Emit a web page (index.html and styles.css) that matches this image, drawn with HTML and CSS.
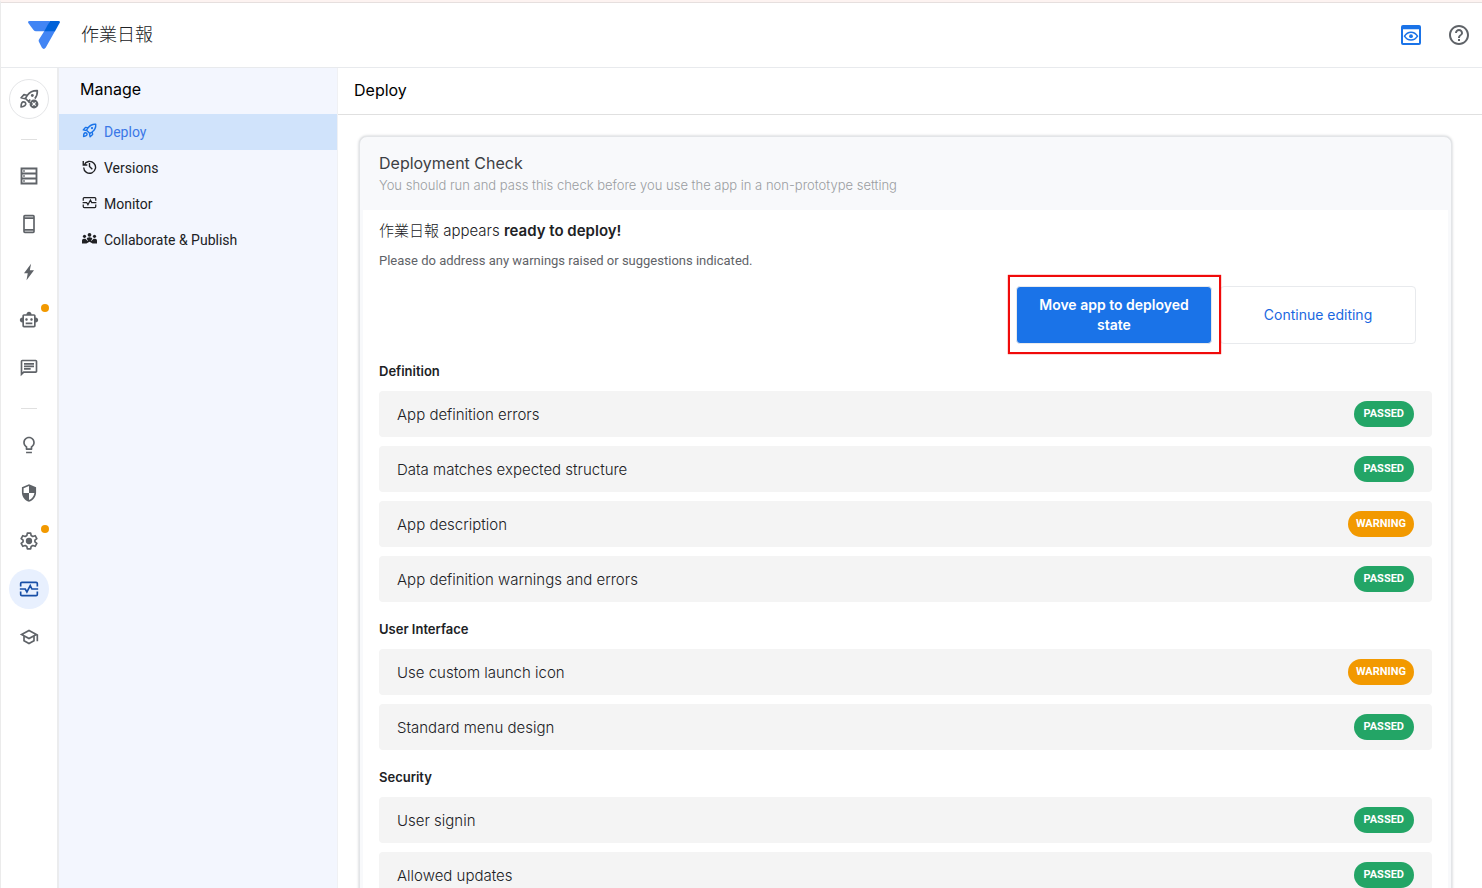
FILE: index.html
```
<!DOCTYPE html>
<html lang="ja">
<head>
<meta charset="utf-8">
<title>作業日報</title>
<link rel="stylesheet" href="styles.css">
</head>
<body>
<svg class="sprite" aria-hidden="true">
  <symbol id="rocket" viewBox="0 0 24 24">
    <g fill="none" stroke="currentColor" stroke-width="2.200" stroke-linejoin="round">
      <path d="M22 2c-5.500-.5-9.500 1.800-12.500 6l-2.200 3.500 5.200 5.200 3.500-2.200c4.200-3 6.500-7 6-12.500z"/>
      <path d="M9.500 7.500L5.500 7 2 11l4.800 1M16.500 14.500l.5 4-4 3.500-1-4.800M2.500 21.500c0-3 .3-6 3-6s3.500 3 1.500 4.500c-1.200 1-2.800 1.500-4.500 1.500z"/>
    </g>
    <circle cx="16" cy="8" r="1.800" fill="currentColor"/>
  </symbol>
  <symbol id="monitor" viewBox="0 0 24 24">
    <path d="M2 9V5.500Q2 4 3.500 4h17Q22 4 22 5.500V9M2 15v3.500Q2 20 3.500 20h17q1.500 0 1.500-1.500V15M1 12h6.500l2 3.500L13.500 8l2 4H23" fill="none" stroke="currentColor" stroke-width="2"/>
  </symbol>
</svg>

<div class="app">
  <header class="topbar">
    <svg class="logo" viewBox="0 0 32 28" aria-label="AppSheet" role="img">
      <path fill="#4285f4" d="M1.500 0H22l-4 10.200H8Q6.500 10.200 5.500 9L.3 2Q-.5 0 1.500 0z"/>
      <path fill="#4285f4" d="M16.500 9.800H27.200L17.800 26.500q-2 2.800-4 0L11 21q-.7-1.200 0-2.400z"/>
      <path fill="#0062d9" d="M22 0h8.500q2 0 1.200 1.800L27 10.200H16.300L19.500 4.200z"/>
    </svg>
    <h1 class="app-name">作業日報</h1>
    <div class="top-actions">
      <button class="icon-btn preview" aria-label="Preview">
        <svg viewBox="0 0 24 24"><path fill="currentColor" fill-rule="evenodd" d="M4 2h16q2 0 2 2v16q0 2-2 2H4q-2 0-2-2V4q0-2 2-2zm0 4.300V20h16V6.300z"/><path d="M5.500 13.200c3.200-5.200 9.800-5.200 13 0-3.200 5.200-9.800 5.200-13 0z" fill="none" stroke="currentColor" stroke-width="1.500"/><circle cx="12" cy="13.200" r="1.900" fill="currentColor"/></svg>
      </button>
      <button class="icon-btn" aria-label="Help">
        <svg viewBox="0 0 24 24"><path fill="currentColor" d="M11 18h2v-2h-2v2zm1-16C6.480 2 2 6.480 2 12s4.480 10 10 10 10-4.480 10-10S17.520 2 12 2zm0 18c-4.410 0-8-3.590-8-8s3.590-8 8-8 8 3.590 8 8-3.590 8-8 8zm0-14c-2.210 0-4 1.790-4 4h2c0-1.100.9-2 2-2s2 .9 2 2c0 2-3 1.750-3 5h2c0-2.250 3-2.500 3-5 0-2.210-1.790-4-4-4z"/></svg>
      </button>
    </div>
  </header>

  <div class="body">
    <nav class="rail" aria-label="Editor">
      <button class="rail-btn outlined" aria-label="Not deployed">
        <svg viewBox="0 0 24 24"><g fill="none" stroke="currentColor" stroke-width="2" stroke-linejoin="round"><path d="M13.500 12.500l-2 2.500-3.800-3.800L10 7.500C13 3.500 17 1.800 22 2c.2 4-.8 7-3 9.500"/><path d="M9.500 7.500L6 6.800 2.500 10.500 7.500 11.500M11.500 15l1.500 1.500M2.500 21.500c0-3 .3-6 3-6s3.500 3 1.500 4.500c-1.200 1-2.800 1.500-4.500 1.500z"/></g><circle cx="16" cy="7.800" r="1.700" fill="currentColor"/><circle cx="18" cy="18" r="5.300" fill="currentColor"/><path d="M16 16l4 4m0-4l-4 4" stroke="#fff" stroke-width="1.500"/></svg>
      </button>
      <span class="rail-line"></span>
      <button class="rail-btn" aria-label="Data">
        <svg viewBox="0 0 24 24"><path d="M3 3h18v18H3zM3 9h18M3 15h18" fill="none" stroke="currentColor" stroke-width="2.200"/><path d="M5 5h2v2H5zM5 11h2v2H5zM5 17h2v2H5z" fill="currentColor"/></svg>
      </button>
      <button class="rail-btn" aria-label="Views">
        <svg viewBox="0 0 24 24"><path fill="currentColor" fill-rule="evenodd" d="M7 1h10q2 0 2 2v18q0 2-2 2H7q-2 0-2-2V3q0-2 2-2zm0 5v12h10V6zm0-3v1h10V3zm0 17v1h10v-1z"/></svg>
      </button>
      <button class="rail-btn" aria-label="Actions">
        <svg viewBox="0 0 24 24"><path fill="currentColor" d="M14.500 2L6 13.500h4.500L9 22l9-12h-5z"/></svg>
      </button>
      <button class="rail-btn" aria-label="Automation">
        <svg viewBox="0 0 24 24"><path fill="currentColor" d="M20 9V7c0-1.100-.9-2-2-2h-3c0-1.660-1.340-3-3-3S9 3.340 9 5H6c-1.100 0-2 .9-2 2v2c-1.660 0-3 1.340-3 3s1.340 3 3 3v4c0 1.100.9 2 2 2h12c1.100 0 2-.9 2-2v-4c1.660 0 3-1.340 3-3s-1.340-3-3-3zm-2 10H6V7h12v12zM9 13c-.83 0-1.500-.67-1.500-1.500S8.170 10 9 10s1.500.67 1.500 1.500S9.830 13 9 13zm7.500-1.500c0 .83-.67 1.500-1.500 1.500s-1.500-.67-1.500-1.500.67-1.500 1.500-1.500 1.500.67 1.500 1.500zM8 15h8v2H8v-2z"/></svg>
        <span class="dot"></span>
      </button>
      <button class="rail-btn" aria-label="Chat apps">
        <svg viewBox="0 0 24 24"><path fill="currentColor" d="M4 4h16v12H5.170L4 17.170V4m0-2c-1.100 0-1.990.9-1.990 2L2 22l4-4h14c1.100 0 2-.9 2-2V4c0-1.100-.9-2-2-2H4zm2 10h8v2H6v-2zm0-3h12v2H6V9zm0-3h12v2H6V6z"/></svg>
      </button>
      <span class="rail-line"></span>
      <button class="rail-btn" aria-label="Intelligence">
        <svg viewBox="0 0 24 24"><path fill="currentColor" d="M8.500 20h7v2h-7zM12 2C8.140 2 5 5.140 5 9c0 2.380 1.190 4.470 3 5.740V17c0 .55.45 1 1 1h6c.55 0 1-.45 1-1v-2.260c1.810-1.270 3-3.360 3-5.740 0-3.860-3.140-7-7-7zm2.850 11.100l-.85.6V16h-4v-2.300l-.85-.6C7.800 12.160 7 10.630 7 9c0-2.760 2.240-5 5-5s5 2.240 5 5c0 1.630-.8 3.160-2.150 4.100z"/></svg>
      </button>
      <button class="rail-btn" aria-label="Security">
        <svg viewBox="0 0 24 24"><path fill="currentColor" d="M12 1.500L3.500 5v6.500c0 5.200 3.600 9.700 8.500 11 4.900-1.300 8.500-5.800 8.500-11V5zm0 10.500h6.500c-.5 3.800-3 7.200-6.500 8.400V12H5.500V6.300L12 3.600z"/></svg>
      </button>
      <button class="rail-btn" aria-label="Settings">
        <svg viewBox="0 0 24 24"><path fill="none" stroke="currentColor" stroke-width="2" stroke-linejoin="round" d="M10 2.500h4l.6 3 1.900 1.100 2.900-1 2 3.500-2.300 1.900v2l2.300 1.900-2 3.500-2.900-1-1.900 1.100-.6 3h-4l-.6-3-1.900-1.100-2.900 1-2-3.500L4.900 13v-2L2.600 9.100l2-3.500 2.900 1 1.900-1.100z"/><circle cx="12" cy="12" r="3.800" fill="currentColor"/></svg>
        <span class="dot"></span>
      </button>
      <button class="rail-btn current" aria-label="Manage"><svg><use href="#monitor"/></svg></button>
      <button class="rail-btn" aria-label="Learn">
        <svg viewBox="0 0 24 24"><path fill="currentColor" d="M12 3L1 9l4 2.180v6L12 21l7-3.820v-6l2-1.090V17h2V9L12 3zm6.820 6L12 12.720 5.180 9 12 5.280 18.820 9zM17 15.990l-5 2.730-5-2.730v-3.720L12 15l5-2.730v3.720z"/></svg>
      </button>
    </nav>

    <aside class="side">
      <h2 class="side-title">Manage</h2>
      <a class="side-item active" href="#deploy"><svg><use href="#rocket"/></svg>Deploy</a>
      <a class="side-item" href="#versions"><svg viewBox="0 0 24 24"><path d="M3.500 9.500a9.500 9.500 0 1 1-.8 4M2 3v6.500h6.500M12 6.500V12l4.500 4.500" fill="none" stroke="currentColor" stroke-width="2.200"/></svg>Versions</a>
      <a class="side-item" href="#monitor-page"><svg><use href="#monitor"/></svg>Monitor</a>
      <a class="side-item" href="#publish"><svg viewBox="0 0 24 24"><g fill="currentColor"><circle cx="12" cy="6" r="3"/><circle cx="4" cy="8.500" r="2.500"/><circle cx="20" cy="8.500" r="2.500"/><path d="M0 20v-5q0-2.500 3-2.500h2.500L9 16l3-5.500L15 16l3.500-3.500H21q3 0 3 2.500v5h-7l-5-3-5 3z"/><path d="M7.500 12.500q0-2.500 4.500-2.500t4.500 2.500L14.500 15h-5z"/></g></svg>Collaborate &amp; Publish</a>
    </aside>

    <main class="main">
      <h2 class="page-title">Deploy</h2>
      <section class="card">
        <header class="card-head">
          <h3>Deployment Check</h3>
          <p>You should run and pass this check before you use the app in a non-prototype setting</p>
        </header>
        <div class="card-body">
          <p class="status">作業日報 appears <strong>ready to deploy!</strong></p>
          <p class="hint">Please do address any warnings raised or suggestions indicated.</p>
          <div class="actions">
            <div class="marked"><button class="btn primary">Move app to deployed state</button></div>
            <button class="btn">Continue editing</button>
          </div>

          <h4>Definition</h4>
          <ul class="checks">
            <li>App definition errors<span class="tag">PASSED</span></li>
            <li>Data matches expected structure<span class="tag">PASSED</span></li>
            <li>App description<span class="tag warn">WARNING</span></li>
            <li>App definition warnings and errors<span class="tag">PASSED</span></li>
          </ul>
          <h4>User Interface</h4>
          <ul class="checks">
            <li>Use custom launch icon<span class="tag warn">WARNING</span></li>
            <li>Standard menu design<span class="tag">PASSED</span></li>
          </ul>
          <h4>Security</h4>
          <ul class="checks">
            <li>User signin<span class="tag">PASSED</span></li>
            <li>Allowed updates<span class="tag">PASSED</span></li>
          </ul>
        </div>
      </section>
    </main>
  </div>
</div>
</body>
</html>
```
FILE: styles.css
```
* { box-sizing: border-box; }
body, h1, h2, h3, h4, p, ul { margin: 0; padding: 0; }
body {
  font-family: Inter, "Noto Sans CJK JP", sans-serif;
  color: #202124;
  background: #fff;
}
button { font: inherit; cursor: pointer; }
.sprite { display: none; }

.app {
  display: flex;
  flex-direction: column;
  height: 100vh;
  border-top: 2px solid #fdf3f1;
  border-left: 1px solid #ebebeb;
}

.topbar {
  display: flex;
  align-items: center;
  flex: none;
  height: 66px;
  padding: 0 11px 0 27px;
  border-top: 1px solid #e6dfde;
  border-bottom: 1px solid #e8eaed;
}
.logo { width: 32px; height: 28px; margin-right: 21px; }
.app-name { font-size: 18px; font-weight: 300; line-height: 24px; }
.top-actions { display: flex; gap: 24px; margin-left: auto; }
.icon-btn {
  width: 24px;
  height: 24px;
  padding: 0;
  border: 0;
  background: none;
  color: #5f6368;
}
.icon-btn svg { display: block; width: 24px; height: 24px; }
.icon-btn.preview { color: #1a73e8; }

.body { display: flex; flex: 1; min-height: 0; }

.rail {
  display: flex;
  flex-direction: column;
  align-items: center;
  flex: none;
  gap: 8px;
  width: 58px;
  padding-top: 11px;
  border-right: 2px solid #ebecee;
}
.rail-btn {
  position: relative;
  display: flex;
  align-items: center;
  justify-content: center;
  flex: none;
  width: 40px;
  height: 40px;
  padding: 0;
  border: 0;
  border-radius: 50%;
  background: none;
  color: #5f6368;
}
.rail-btn svg { width: 20px; height: 20px; }
.rail-btn.outlined { border: 1px solid #e4e5e7; }
.rail-btn.current { background: #e8f0fe; color: #174ea6; }
.rail-line { width: 16px; height: 1px; margin: 12px 0 8px; background: #e0e0e0; }
.dot {
  position: absolute;
  top: 4px;
  right: 0;
  width: 8px;
  height: 8px;
  border-radius: 50%;
  background: #f29900;
}

.side {
  flex: none;
  width: 279px;
  background: #f3f6fe;
  border-right: 1px solid #f0f1f4;
}
.side-title {
  padding: 9px 21px 13px;
  font-size: 16px;
  font-weight: 400;
  line-height: 24px;
  color: #000;
}
.side-item {
  display: flex;
  align-items: center;
  gap: 7px;
  height: 36px;
  padding: 0 23px;
  font-family: Roboto, sans-serif;
  font-size: 14px;
  color: #202124;
  text-decoration: none;
}
.side-item svg { width: 15px; height: 15px; margin-bottom: 3px; }
.side-item.active { background: #d0e3fb; color: #3b78e7; }
.side-item.active svg { color: #1a73e8; }

.main { flex: 1; min-width: 0; overflow-y: auto; scrollbar-width: none; }
.page-title {
  padding: 10px 16px 12px;
  border-bottom: 1px solid #e0e0e0;
  font-size: 16px;
  font-weight: 400;
  line-height: 24px;
  color: #000;
}
.card {
  margin: 21px 30px 24px 21px;
  padding: 0 3px;
  border: 1px solid #e3e5e8;
  border-radius: 8px;
  background: #f8f9fb;
  box-shadow: 0 0 3px #c4c7ca;
}
.card-head { padding: 14px 16px 15px; }
.card-head h3 { font-size: 16px; font-weight: 400; line-height: 24px; color: #3c4043; }
.card-head p { font-size: 13px; font-weight: 300; line-height: 20px; color: #9a9da1; }
.card-body { padding: 10px 16px 24px; background: #fff; }
.status { font-size: 15px; font-weight: 300; line-height: 22px; }
.status strong { font-weight: 600; }
.hint {
  margin-top: 9px;
  font-family: Roboto, sans-serif;
  font-size: 13px;
  line-height: 20px;
  color: #5f6368;
}
.actions {
  display: flex;
  justify-content: flex-end;
  gap: 8px;
  padding: 15px 16px 0;
}
.btn {
  width: 196px;
  min-height: 58px;
  padding: 8px 16px;
  border: 1px solid #e8eaed;
  border-radius: 4px;
  background: #fff;
  font-size: 14px;
  font-weight: 400;
  line-height: 20px;
  color: #1a67e0;
}
.btn.primary { background: #1a73e8; color: #fff; font-weight: 600; }
.marked { position: relative; }
.marked::after {
  content: "";
  position: absolute;
  inset: -11px -9px -10px -8px;
  border: 2px solid #f00a0a;
  box-shadow: 0 0 1px #f00a0a;
  pointer-events: none;
}
h4 { padding: 17px 0 10px; font-size: 13px; font-weight: 600; line-height: 20px; }
.checks { display: grid; gap: 9px; list-style: none; }
.checks li {
  display: flex;
  align-items: center;
  justify-content: space-between;
  height: 46px;
  padding: 0 18px;
  border-radius: 4px;
  background: #f4f4f4;
  font-size: 15px;
  font-weight: 300;
}
.tag {
  padding: 0 10px;
  border-radius: 13px;
  background: #23a566;
  color: #fff;
  font-family: Roboto, sans-serif;
  font-size: 11px;
  font-weight: 700;
  line-height: 26px;
}
.tag.warn { padding: 0 8px; background: #f29900; }
```
